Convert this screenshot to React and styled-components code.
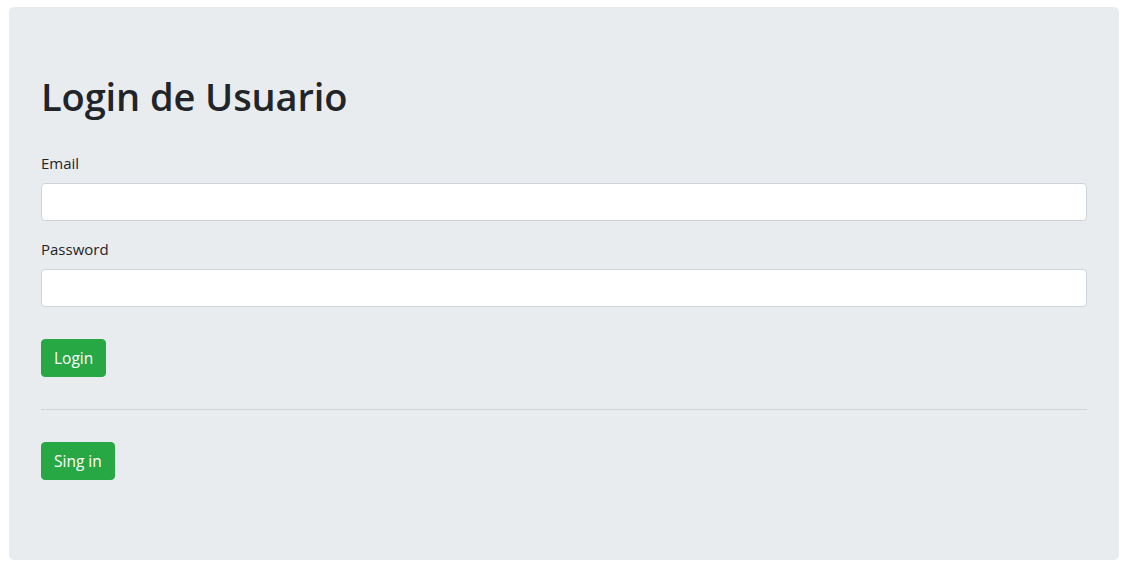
import React from "react";
import styled, { createGlobalStyle } from "styled-components";

const Global = createGlobalStyle`
  html, body { margin: 0; padding: 0; background: #fff; }
  body {
    font-family: "Open Sans", "Noto Sans", "Liberation Sans", sans-serif;
    color: #212529;
    font-size: 16px;
    line-height: 1.5;
  }
  * { box-sizing: border-box; }
`;

const Page = styled.div`
  padding: 7px 12px 11px 9px;
`;

const Jumbotron = styled.div`
  background: #e9ecef;
  border-radius: 4.8px;
  padding: 64px 32px 80px;
`;

const Title = styled.h1`
  margin: 0 0 32px;
  padding-top: 1px;
  height: 48px;
  font-size: 38px;
  font-weight: 600;
  line-height: 48px;
  letter-spacing: -0.1px;
`;

const Group = styled.div`
  margin-bottom: ${(p) => p.$mb || 16}px;
`;

const Label = styled.label`
  display: block;
  font-size: 15px;
  line-height: 24px;
  margin-bottom: 8px;
`;

const Input = styled.input`
  display: block;
  width: 100%;
  height: 38px;
  padding: 6px 12px;
  font-size: 16px;
  border: 1px solid #ced4da;
  border-radius: 4px;
  background: #fff;
  outline: none;
`;

const Button = styled.button`
  display: inline-block;
  height: 38px;
  padding: 0 12px;
  font-family: inherit;
  font-size: 15.5px;
  line-height: 36px;
  color: #fff;
  background: #28a745;
  border: 1px solid #28a745;
  border-radius: 4px;
  cursor: pointer;
`;

const Rule = styled.hr`
  margin: 32px 0;
  border: 0;
  border-top: 1px solid rgba(0, 0, 0, 0.1);
`;

export default function App() {
  return (
    <>
      <Global />
      <Page>
        <Jumbotron>
          <Title>Login de Usuario</Title>
          <Group>
            <Label htmlFor="email">Email</Label>
            <Input id="email" type="email" />
          </Group>
          <Group $mb={32}>
            <Label htmlFor="password">Password</Label>
            <Input id="password" type="password" />
          </Group>
          <Button>Login</Button>
          <Rule />
          <Button>Sing in</Button>
        </Jumbotron>
      </Page>
    </>
  );
}
